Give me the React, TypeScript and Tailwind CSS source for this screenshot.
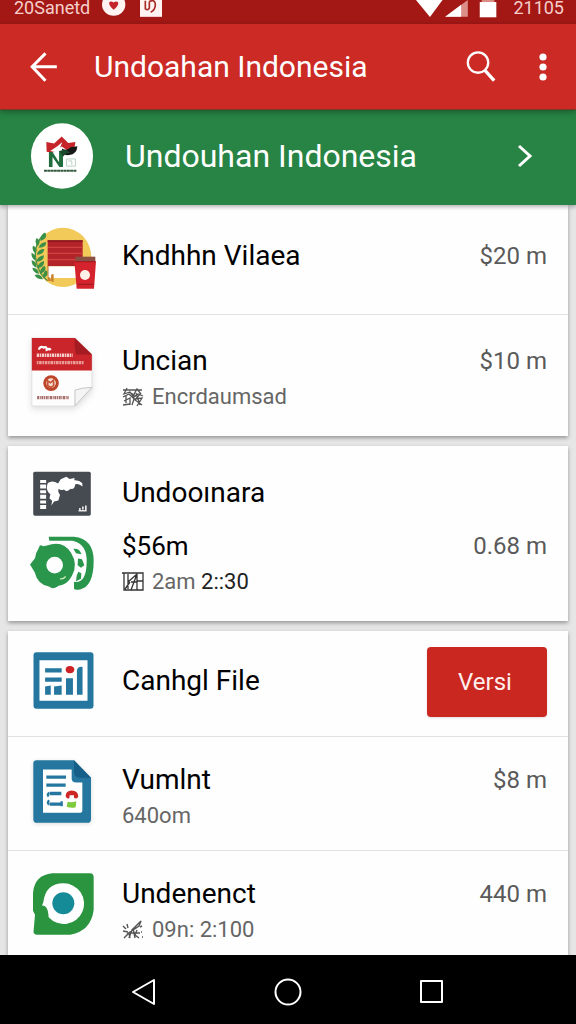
import type { ReactNode } from "react";

function BrandLogo() {
  return (
    <svg viewBox="92 54 192 202" className="h-[66px] w-16 shrink-0" aria-hidden="true">
      <ellipse cx="188" cy="155" rx="95" ry="100" fill="#fff" />
      <path d="M140 112l24 5 23-22 20 20 22-3-2 14-20 14-20-14-28 19-18-3z" fill="#c5252a" />
      <path d="M188 132q14 10 26-4l21-3q-1 24-25 27-16 2-24-6z" fill="#171717" />
      <path d="M152 140l24-16 13-12-7 18 9 9-12 6z" fill="#fff" />
      <path d="M148 143h11l20 31v-34h12v49h-11l-21-31v31h-11z" fill="#216c3c" />
      <path d="M180 140l16-5 18 9-14 3-9 10z" fill="#1d4a2d" />
      <path d="M202 164h27v22h-27zM208 170h10v12" fill="none" stroke="#b9d2c1" strokeWidth="3" />
      <path d="M133 200h99" stroke="#35593f" strokeWidth="6" strokeDasharray="9 1" />
    </svg>
  );
}

function VillageIcon() {
  return (
    <svg viewBox="60 36 198 189" className="h-[63px] w-[66px]" aria-hidden="true">
      <ellipse cx="159" cy="127" rx="85" ry="89" fill="#f2ca5a" />
      <path d="M104 54Q68 92 78 135q6 38 34 62" fill="none" stroke="#569044" strokeWidth="4" />
      <g fill="#3b9048">
        <path d="M92 78q-4-17 14-25 9 17-14 25zM83 94q-11-12-3-25 16 8 3 25zM86 98q5-16 23-16-1 17-23 16zM77 116q-13-10-8-24 16 6 8 24zM80 119q4-17 23-17-2 18-23 17zM76 137q-14-9-11-24 16 6 11 24zM79 140q4-17 23-19 0 19-23 19zM79 158q-15-7-14-22 17 4 14 22zM82 160q2-18 20-22 3 18-20 22zM87 177q-18-4-20-19 19 1 20 19zM90 177q-2-17 14-25 9 16-14 25zM99 193q-18 1-25-13 18-6 25 13zM101 190q-6-15 7-25 12 13-7 25z" />
      </g>
      <path d="M113 76h105v78H113z" fill="#b3232a" />
      <path d="M113 76h105v5H113z" fill="#8c1920" />
      <path d="M114 97h103M114 115h103M114 134h103" stroke="#d2423e" strokeWidth="4" />
      <path d="M114 154h86v35h-86z" fill="#fff" />
      <path d="M114 152v32" stroke="#b0762a" strokeWidth="3" />
      <path d="M114 184q8 3 8 14h-10zM122 198l2-20h7v24z" fill="#c98430" />
      <path d="M193 139h65l-6 82h-52z" fill="#d4232c" />
      <path d="M196 125h60v15h-60z" fill="#8b5044" />
      <path d="M196 140h60M203 208h49" stroke="#a51b22" strokeWidth="4" />
      <circle cx="225" cy="180" r="15" fill="#fff1e8" />
    </svg>
  );
}

function BrochureIcon() {
  return (
    <svg viewBox="58 36 198 214" className="h-[71px] w-[66px] drop-shadow-md" aria-hidden="true">
      <path d="M63 39h130l51 48v105l-51 52H63z" fill="#fdfdfd" stroke="#d8d8d8" strokeWidth="2" />
      <path d="M63 39h130l51 50v48H63z" fill="#c9252a" />
      <path d="M193 40l51 49h-48q-6-22-3-49z" fill="#a51b22" />
      <path d="M84 74q5-12 15-6 8-5 9 6 8-4 12 1" fill="none" stroke="#fff" strokeWidth="7" />
      <path d="M78 91h108" stroke="#f7cdca" strokeWidth="11" strokeDasharray="7 2 4 2" />
      <path d="M78 113h142" stroke="#eb9c98" strokeWidth="10" strokeDasharray="5 2 8 2" />
      <circle cx="121" cy="175" r="19" fill="#f9dfd0" stroke="#bd4529" strokeWidth="9" />
      <path d="M111 168l8 6 9-8 1 16-9 6-9-6z" fill="none" stroke="#c45436" strokeWidth="5" />
      <path d="M79 219h95" stroke="#a56b68" strokeWidth="10" strokeDasharray="6 2 3 2" />
      <path d="M193 244v-48q24-8 51-8z" fill="#f4f4f4" stroke="#c5c5c5" strokeWidth="3" />
    </svg>
  );
}

function MapIcon() {
  return (
    <svg viewBox="60 48 198 136" className="h-[45px] w-[66px]" aria-hidden="true">
      <rect x="69" y="50" width="174" height="133" rx="5" fill="#464b51" />
      <path d="M99 75v92" stroke="#fff" strokeWidth="18" strokeDasharray="9 5 12 5" />
      <path d="M113 84q15-10 31 2l8-13 17-8 10 7 15-3-1 7q15-1 24 8l1 11q-11-11-22-7-1 16-14 14-10 12-20 2-10 4-16-2-4 9 4 18l-5 17-13 3-8 12 2-14-8-8 3-12q-14-9-10-26z" fill="#fff" />
      <path d="M206 168h22v-16M210 160v8M219 155v9" fill="none" stroke="#e8e8e8" strokeWidth="5" />
    </svg>
  );
}

function ReelIcon() {
  return (
    <svg viewBox="60 240 192 164" className="h-[55px] w-16" aria-hidden="true">
      <path d="M116 242h76q59 6 59 72 0 77-41 86-17 3-18-3v-20q37 6 38-59 2-54-43-64H118z" fill="#29964b" />
      <path fillRule="evenodd" d="M86 276q3-14 13-6l12-2q48-17 72 22 22 35 3 69-15 28-40 30-16 13-29 2-34-6-43-43l-14-23 15-19q2-17 11-30zM134 302a25 25 0 1 0 0 50 25 25 0 0 0 0-50z" fill="#29964b" />
      <path d="M190 278q19-2 24 16l-16-3zM204 307l12 2 7 18-10 8-10-8zM205 347l9 4-1 17-15 7 2-16z" fill="#29964b" />
      <path d="M150 368q9 2 17-7" stroke="#d6efb8" strokeWidth="4" fill="none" />
    </svg>
  );
}

function ChartIcon() {
  return (
    <svg viewBox="60 66 198 172" className="h-[57px] w-[66px]" aria-hidden="true">
      <rect x="70" y="67" width="181" height="170" rx="9" fill="#2577a0" />
      <path d="M88 91h145v122H88z" fill="#fff" />
      <path d="M105 115h50v13h-50zM105 143h50v13h-50zM105 170l17-3v28h-17zM132 170l23-3v28h-23zM168 145h21v50h-21zM201 121q3-12 17-10v84h-17z" fill="#2577a0" />
      <ellipse cx="180" cy="119" rx="13" ry="11" fill="#cc2225" />
    </svg>
  );
}

function DocumentIcon() {
  return (
    <svg viewBox="60 43 198 194" className="h-[65px] w-[66px] drop-shadow-sm" aria-hidden="true">
      <path d="M80 46h112l51 53v124q0 11-11 11H81q-11 0-11-11V56q0-10 10-10z" fill="#2577a0" />
      <path d="M192 46v34q0 18 18 19h33z" fill="#155f89" />
      <path d="M99 74h86v28q0 11 14 11h18v83q0 8-9 8H99z" fill="#fff" />
      <path d="M109 97h59M109 121h58M119 146h35M119 178h35" stroke="#2577a0" strokeWidth="10" />
      <path d="M118 144q-8 5-2 11M117 180q-7-8 1-13M155 169v15" fill="none" stroke="#2577a0" strokeWidth="7" />
      <path d="M167 154q0-16 18-17 19 0 20 18-4 9-13 4v-8h-13l-1 9q-7 4-11-6z" fill="#ce2525" />
      <path d="M173 171q14 3 26-2l-2 18q-13 4-27-1z" fill="#7ccb3c" />
    </svg>
  );
}

function SpeechIcon() {
  return (
    <svg viewBox="60 56 198 186" className="h-[62px] w-[66px]" aria-hidden="true">
      <path d="M127 57h113q11 0 11 12v98q-8 63-70 74H80q-12-1-9-13l4-47-6-12v-52q4-55 58-60z" fill="#2b943f" />
      <path d="M160 87a61 61 0 1 1-44 102q-2-25-8-30-4-6-12-5 2-6 4-10 7-57 60-57z" fill="#fff" />
      <circle cx="160" cy="147" r="33" fill="#168b98" />
      <path d="M100 160q10 4 12 30l-8-8z" fill="#2b943f" />
    </svg>
  );
}

function Seal() {
  return (
    <svg viewBox="0 0 22 20" className="h-5 w-[22px] shrink-0" fill="none" stroke="#555" strokeWidth="1.3" aria-hidden="true">
      <path d="M1 3h19M5 1l-3 6 6-2 3 4 4-7 4 5M1 10l6-3 4 4 5-4 5 2M2 14l6-3v7M1 18l7-1M4 9v7M10 7l2 5-2 6M12 12l8-1-5 8M14 6l4 12M18 7l-5 6 7 5M7 5l7 4" />
    </svg>
  );
}

function Grid() {
  return (
    <svg viewBox="0 0 22 20" className="h-5 w-[22px] shrink-0" fill="none" stroke="#333" strokeWidth="1.3" aria-hidden="true">
      <path d="M0 1h21v17H2V1M6 2v15M6 10l9-8M3 17l5-7M9 18l6-16v16M15 9h6M9 10h6" />
    </svg>
  );
}

function Sparkle() {
  return (
    <svg viewBox="0 0 22 20" className="h-5 w-[22px] shrink-0" fill="none" stroke="#555" strokeWidth="1.4" aria-hidden="true">
      <path d="M1 6l3 3M5 4l1 4M1 11l5 1M2 18l5-5 1 5M5 14l12-8 2-5-9 9-3 8M11 8l2 10M8 13h10M15 10l-2 5 4 3M18 7l2-1M19 12h1M20 17h1" />
    </svg>
  );
}

function Title({ children }: { children: ReactNode }) {
  return <h2 className="text-[28px] leading-9 font-normal text-black">{children}</h2>;
}

function Price({ children }: { children: ReactNode }) {
  return <span className="shrink-0 text-[24px] leading-8 font-normal text-[#5a5a5a]">{children}</span>;
}

function Note({ icon, children }: { icon?: ReactNode; children: ReactNode }) {
  return (
    <p className="mt-[2px] flex items-center gap-2 text-[22px] leading-8 font-normal text-[#666]">
      {icon}
      {children}
    </p>
  );
}

function Card({ children }: { children: ReactNode }) {
  return <section className="mx-2 divide-y divide-[#e2e2e2] bg-[#fefefe] shadow-[0_2px_4px_rgba(0,0,0,0.35)]">{children}</section>;
}

function Picture({ children }: { children: ReactNode }) {
  return <div className="flex w-[66px] shrink-0 flex-col gap-5">{children}</div>;
}

export default function App() {
  return (
    <div className="flex min-h-screen flex-col bg-[#e6e6e6] font-['Roboto','Liberation_Sans',sans-serif]">
      <div className="flex h-6 items-start justify-between bg-[#a31815] pr-3 pl-[14px] text-[18px] leading-4 font-normal text-[#f6cfca]">
        <div className="flex gap-3">
          <span>20Sanetd</span>
          <svg viewBox="306 0 180 50" className="h-[17px] w-[60px]" aria-hidden="true">
            <ellipse cx="341" cy="13" rx="35" ry="34" fill="#fff4f2" />
            <path d="M327 8q6-8 14-1 9-7 14 1 0 10-14 21-13-11-14-21z" fill="#c3232b" />
            <path d="M420-4h66v54h-66z" fill="#fff4f2" />
            <path d="M436 2v24q8 6 12-2V4M448 4q18-8 18 10 0 16-14 22" fill="none" stroke="#a62b26" strokeWidth="5" />
          </svg>
        </div>
        <div className="flex gap-4">
          <svg viewBox="390 0 244 54" className="h-[18px] w-[81px]" aria-hidden="true">
            <path d="M390 0h80l-38 51z" fill="#fff" />
            <path d="M546 0v50h-68z" fill="#dc8f89" />
            <path d="M526 14v36h-48z" fill="#fff" />
            <path d="M582 6h50v46h-50z" fill="#fff" />
            <path d="M588 0h38v6h-38z" fill="#dc8f89" />
          </svg>
          <span>21105</span>
        </div>
      </div>

      <header className="relative z-20 flex h-[86px] items-center border-b border-[#7c3a22] bg-[#cb2a25] pr-[27px] pl-[29px] text-white shadow-[0_2px_6px_rgba(0,0,0,0.35)]">
        <button type="button" aria-label="Kembali" className="w-[65px]">
          <svg viewBox="88 154 86 90" className="h-[30px] w-[29px]" fill="none" stroke="currentColor" strokeWidth="9">
            <path d="M171 198H97M137 158l-40 40 40 42" />
          </svg>
        </button>
        <h1 className="flex-1 text-[30px] leading-9 font-normal">Undoahan Indonesia</h1>
        <button type="button" aria-label="Cari" className="w-[30px]">
          <svg viewBox="532 152 90 94" className="h-[31px] w-[30px]" fill="none" stroke="currentColor">
            <circle cx="568" cy="187" r="31" strokeWidth="7" />
            <path d="M589 211l28 31" strokeWidth="10" />
          </svg>
        </button>
        <button type="button" aria-label="Menu lainnya" className="ml-[41px] w-3">
          <svg viewBox="0 0 12 30" className="h-[30px] w-3" fill="currentColor">
            <circle cx="6" cy="5" r="3.600" />
            <circle cx="6" cy="15" r="3.600" />
            <circle cx="6" cy="25" r="3.600" />
          </svg>
        </button>
      </header>

      <a href="#unduhan" className="relative z-10 flex h-[95px] items-center bg-[#278444] pr-[43px] pb-[3px] pl-[30px] text-white shadow-[0_2px_4px_rgba(0,0,0,0.3)]">
        <BrandLogo />
        <span className="ml-[31px] flex-1 text-[32px] leading-10">Undouhan Indonesia</span>
        <svg viewBox="0 0 16 24" className="h-6 w-4" fill="none" stroke="currentColor" strokeWidth="3" aria-hidden="true">
          <path d="M2 2l11 10L2 22" />
        </svg>
      </a>

      <main className="flex flex-1 flex-col gap-[10px]">
        <Card>
          <article className="flex h-[110px] items-center gap-[26px] pr-[21px] pb-[3px] pl-[22px]">
            <Picture><VillageIcon /></Picture>
            <div className="flex flex-1 items-center justify-between pb-1">
              <Title>Kndhhn Vilaea</Title>
              <Price>$20 m</Price>
            </div>
          </article>
          <article className="flex h-[121px] items-start gap-[26px] pt-[22px] pr-[21px] pl-[22px]">
            <Picture><BrochureIcon /></Picture>
            <div className="flex-1 pt-[6px]">
              <div className="flex items-center justify-between">
                <Title>Uncian</Title>
                <Price>$10 m</Price>
              </div>
              <Note icon={<Seal />}>Encrdaumsad</Note>
            </div>
          </article>
        </Card>

        <Card>
          <article className="flex h-[175px] items-start gap-[26px] pt-[25px] pr-[21px] pl-[22px]">
            <Picture>
              <MapIcon />
              <ReelIcon />
            </Picture>
            <div className="flex-1 pt-1">
              <Title>Undooınara</Title>
              <div className="mt-[17px] flex items-center justify-between">
                <p className="text-[26px] leading-9 text-black">$56m</p>
                <Price>0.68 m</Price>
              </div>
              <Note icon={<Grid />}><span>2am <span className="text-[#222]">2::30</span></span></Note>
            </div>
          </article>
        </Card>

        <Card>
          <article className="flex h-[106px] items-center gap-[26px] pr-[21px] pb-[6px] pl-[22px]">
            <Picture><ChartIcon /></Picture>
            <div className="flex flex-1 items-center justify-between">
              <Title>Canhgl File</Title>
              <button type="button" className="mt-[3px] h-[70px] w-[120px] rounded bg-[#ca2720] pr-1 text-[24px] text-[#fff0ee] shadow-sm">Versi</button>
            </div>
          </article>
          <article className="flex h-[114px] items-start gap-[26px] pt-[22px] pr-[21px] pl-[22px]">
            <Picture><DocumentIcon /></Picture>
            <div className="flex-1 pt-[3px]">
              <div className="flex items-center justify-between">
                <Title>Vumlnt</Title>
                <Price>$8 m</Price>
              </div>
              <Note>640om</Note>
            </div>
          </article>
          <article className="flex h-[104px] items-start gap-[26px] pt-[22px] pr-[21px] pl-[22px]">
            <Picture><SpeechIcon /></Picture>
            <div className="flex-1 pt-[3px]">
              <div className="flex items-center justify-between">
                <Title>Undenenct</Title>
                <Price>440 m</Price>
              </div>
              <Note icon={<Sparkle />}>09n: 2:100</Note>
            </div>
          </article>
        </Card>
      </main>

      <nav className="relative z-10 flex h-[69px] items-center justify-center gap-[116px] bg-black pt-1 text-white">
        <button type="button" aria-label="Kembali">
          <svg viewBox="0 0 28 28" className="size-7" fill="none" stroke="currentColor" strokeWidth="2" strokeLinejoin="round">
            <path d="M24 2v24L3 14z" />
          </svg>
        </button>
        <button type="button" aria-label="Beranda">
          <svg viewBox="0 0 28 28" className="size-7" fill="none" stroke="currentColor" strokeWidth="2">
            <circle cx="14" cy="14" r="12.500" />
          </svg>
        </button>
        <button type="button" aria-label="Aplikasi terbaru">
          <svg viewBox="0 0 28 28" className="size-7" fill="none" stroke="currentColor" strokeWidth="2" strokeLinejoin="round">
            <path d="M3 3h21v21H3z" />
          </svg>
        </button>
      </nav>
    </div>
  );
}
